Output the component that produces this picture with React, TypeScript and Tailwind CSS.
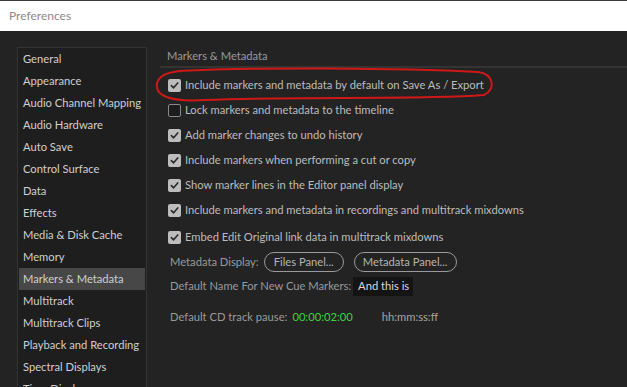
import React from "react";

const categories = [
  "General",
  "Appearance",
  "Audio Channel Mapping",
  "Audio Hardware",
  "Auto Save",
  "Control Surface",
  "Data",
  "Effects",
  "Media & Disk Cache",
  "Memory",
  "Markers & Metadata",
  "Multitrack",
  "Multitrack Clips",
  "Playback and Recording",
  "Spectral Displays",
  "Time Display",
];

const options = [
  { label: "Include markers and metadata by default on Save As / Export", checked: true },
  { label: "Lock markers and metadata to the timeline", checked: false },
  { label: "Add marker changes to undo history", checked: true },
  { label: "Include markers when performing a cut or copy", checked: true },
  { label: "Show marker lines in the Editor panel display", checked: true },
  { label: "Include markers and metadata in recordings and multitrack mixdowns", checked: true },
  { label: "Embed Edit Original link data in multitrack mixdowns", checked: true },
];

const Checkbox = ({ checked }: { checked: boolean }) =>
  checked ? (
    <span className="flex h-[13px] w-[13px] shrink-0 items-center justify-center rounded-[2px] bg-[#bdbdbd]">
      <svg width="9" height="9" viewBox="0 0 10 10" fill="none">
        <path d="M1.5 5.2 L4 7.6 L8.6 2.2" stroke="#2a2a2a" strokeWidth="1.8" strokeLinecap="round" strokeLinejoin="round" />
      </svg>
    </span>
  ) : (
    <span className="h-[13px] w-[13px] shrink-0 rounded-[2px] border border-[#8a8a8a] bg-[#1d1d1d]" />
  );

const App = () => {
  return (
    <div
      className="relative h-[387px] w-[627px] overflow-hidden bg-[#232323] text-[11.2px]"
      style={{ fontFamily: "Lato, 'Noto Sans', sans-serif" }}
    >
      {/* Title bar */}
      <div className="flex h-[31px] items-center border-t border-[#3c3c3c] bg-white pl-[9px] text-[12px] text-[#8a8a8a]">
        Preferences
      </div>

      <div className="flex">
        {/* Category list */}
        <div className="ml-[17px] mt-[16px] h-[400px] w-[130px] shrink-0 border border-[#333] bg-[#1e1e1e] px-[1px]">
          {categories.map((c) => (
            <div
              key={c}
              className={
                "flex h-[22px] items-center whitespace-nowrap pl-[4px] text-[#cfcfcf] " +
                (c === "Markers & Metadata" ? "bg-[#474747]" : "")
              }
            >
              {c}
            </div>
          ))}
        </div>

        {/* Settings panel */}
        <div className="ml-[13px] flex-1">
          <div className="mt-[17px] flex h-[16px] items-center pl-[7px] text-[#9a9a9a]">Markers &amp; Metadata</div>
          <div className="mt-[2px] h-[2px] bg-[#343434]" />
          <div className="mt-[5px] flex flex-col pl-[8px]">
            {options.map((o, i) => (
              <div
                key={o.label}
                className={"flex items-center gap-[4px] whitespace-nowrap text-[#bcbcbc] " + (i === 6 ? "mt-[2px] h-[25px]" : "h-[25px]")}
              >
                <Checkbox checked={o.checked} />
                {o.label}
              </div>
            ))}
          </div>

          <div className="flex flex-col pl-[10px] text-[#9a9a9a]">
            <div className="flex h-[24px] items-center">
              <span>Metadata Display:</span>
              <span className="ml-[5px] flex h-[20px] w-[80px] items-center justify-center rounded-full border border-[#9a9a9a] text-[#b5b5b5]">
                Files Panel...
              </span>
              <span className="ml-[10px] flex h-[20px] w-[103px] items-center justify-center rounded-full border border-[#9a9a9a] text-[#b5b5b5]">
                Metadata Panel...
              </span>
            </div>
            <div className="flex h-[24px] items-center">
              <span>Default Name For New Cue Markers:</span>
              <span className="ml-[2px] flex h-[19px] w-[60px] items-center bg-[#141414] pl-[5px] text-[#d8d8d8]">And this is</span>
            </div>
            <div className="mt-[4px] flex h-[30px] items-center">
              <span>Default CD track pause:</span>
              <span className="ml-[5px] text-[#3fd43f]">00:00:02:00</span>
              <span className="ml-[29px] text-[#a5a5a5]">hh:mm:ss:ff</span>
            </div>
          </div>
        </div>
      </div>

      {/* red annotation */}
      <svg className="pointer-events-none absolute inset-0" width="627" height="387">
        <path
          d="M178 71 C 260 67, 400 68, 478 72 C 494 74, 496 90, 484 95 C 420 100, 300 96, 205 100 C 170 102, 155 96, 157 84 C 158 76, 166 72, 182 71"
          fill="none"
          stroke="#cf1818"
          strokeWidth="2"
          strokeLinecap="round"
        />
      </svg>
    </div>
  );
};

export default App;
